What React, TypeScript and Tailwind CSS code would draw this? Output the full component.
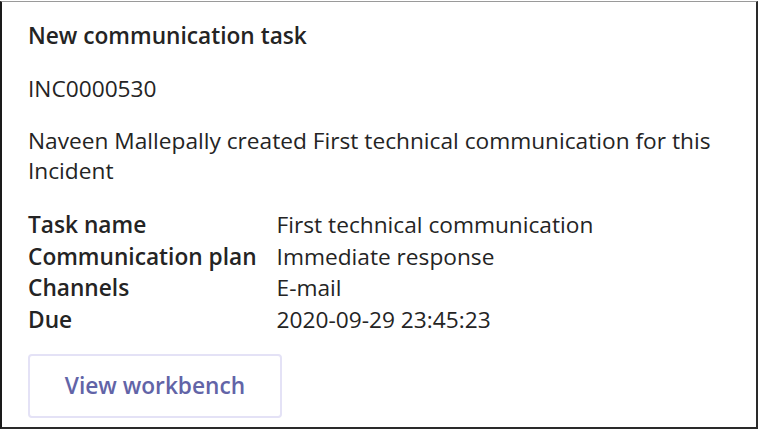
export default function App() {
  const facts = [
    ["Task name", "First technical communication"],
    ["Communication plan", "Immediate response"],
    ["Channels", "E-mail"],
    ["Due", "2020-09-29 23:45:23"],
  ]

  return (
    <div className="w-[765px] h-[430px] bg-white pt-px">
      {/* Card */}
      <div
        className="w-[758px] h-[428px] border-t border-t-[#9a9a9a] border-l-2 border-l-[#1a1a1a] border-r-2 border-r-[#2a2a2a] border-b-2 border-b-[#2a2a2a] pl-[26px] pt-[19px] flex flex-col text-[#242424] text-[22.7px]"
        style={{ fontFamily: '"Open Sans", "Noto Sans", sans-serif' }}
      >
        <div className="leading-[30px] font-semibold">New communication task</div>
        <div className="leading-[30px] mt-[23px]">INC0000530</div>
        <div className="leading-[30px] mt-[22px] w-[720px]">
          Naveen Mallepally created First technical communication for this Incident
        </div>

        {/* Facts */}
        <div className="mt-[23px] grid grid-cols-[auto_1fr] gap-x-[20px]">
          {facts.map(([label, value]) => (
            <div key={label} className="contents">
              <div className="leading-[31.7px] font-semibold">{label}</div>
              <div className="leading-[31.7px]">{value}</div>
            </div>
          ))}
        </div>

        <button className="mt-[18px] w-[254px] h-[64px] rounded-[4px] border-2 border-[#e4e2f6] bg-white text-[#6264a7] font-semibold text-[22.7px]">
          View workbench
        </button>
      </div>
    </div>
  )
}
